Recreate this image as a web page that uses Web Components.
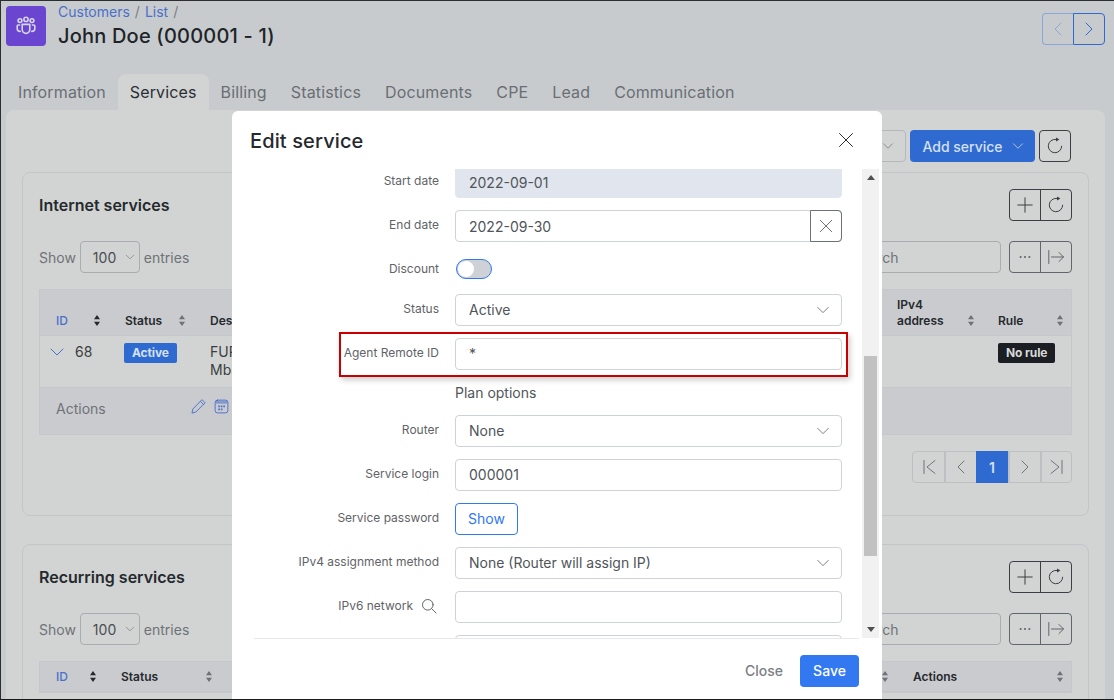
<!DOCTYPE html>
<html>
<head>
<meta charset="utf-8">
<title>Edit service</title>
<style>
    html, body { margin: 0; padding: 0; height: 100%; }
    body { font-family: Inter, "Liberation Sans", sans-serif; font-size: 14px; overflow: hidden; }
</style>
</head>
<body>
<customer-page>
    <page-header slot="header"></page-header>
    <tab-bar slot="tabs"></tab-bar>
    <services-toolbar></services-toolbar>

    <service-card heading="Internet services">
        <data-table columns="68px 85px 1fr 101px 90px">
            <table-head slot="head" first>ID</table-head>
            <table-head slot="head">Status</table-head>
            <table-head slot="head">Description</table-head>
            <table-head slot="head" class="narrow">IPv4<br>address</table-head>
            <table-head slot="head">Rule</table-head>

            <table-cell slot="row" expander>68</table-cell>
            <table-cell slot="row"><status-badge>Active</status-badge></table-cell>
            <table-cell slot="row">FUR<br>Mbps</table-cell>
            <table-cell slot="row"></table-cell>
            <table-cell slot="row"><status-badge kind="dark">No rule</status-badge></table-cell>

            <row-actions slot="footer"></row-actions>
        </data-table>
        <page-nav></page-nav>
    </service-card>

    <service-card heading="Recurring services">
        <data-table columns="64px 116px 1fr 175px">
            <table-head slot="head" first>ID</table-head>
            <table-head slot="head">Status</table-head>
            <table-head slot="head">Description</table-head>
            <table-head slot="head">Actions</table-head>
        </data-table>
    </service-card>

    <edit-dialog slot="overlay" heading="Edit service">
        <form-row label="Start date"><text-box disabled>2022-09-01</text-box></form-row>
        <form-row label="End date"><text-box clearable>2022-09-30</text-box></form-row>
        <form-row label="Discount" short><toggle-switch></toggle-switch></form-row>
        <form-row label="Status"><text-box select>Active</text-box></form-row>
        <form-row label="Agent Remote ID" marked><text-box>*</text-box></form-row>
        <form-row plain label=""><span>Plan options</span></form-row>
        <form-row label="Router"><text-box select>None</text-box></form-row>
        <form-row label="Service login"><text-box>000001</text-box></form-row>
        <form-row label="Service password"><outline-button>Show</outline-button></form-row>
        <form-row label="IPv4 assignment method"><text-box select>None (Router will assign IP)</text-box></form-row>
        <form-row label="IPv6 network" searchable><text-box></text-box></form-row>
        <form-row label=""><text-box></text-box></form-row>
    </edit-dialog>
</customer-page>

<script>
const S = 'fill="none" stroke="currentColor" stroke-width="1" stroke-linecap="round" stroke-linejoin="round"'
const ICONS = {
    down: `<path ${S} d="M2 5l6 6 6-6"/>`,
    left: `<path ${S} d="M11 2L5 8l6 6"/>`,
    right: `<path ${S} d="M5 2l6 6-6 6"/>`,
    first: `<path ${S} d="M3 1.5v13M14 1.5L6 8l8 6.5"/>`,
    last: `<path ${S} d="M13 1.5v13M2 1.5L10 8l-8 6.5"/>`,
    close: `<path ${S} d="M1.5 1.5l13 13M14.5 1.5l-13 13"/>`,
    plus: `<path ${S} d="M8 .8v14.4M.8 8h14.4"/>`,
    refresh: `<path ${S} d="M9 1.4a6.7 6.7 0 1 0 5.7 6.8"/><path fill="currentColor" d="M9 -.4l3.4 1.9L9 3.4z"/>`,
    dots: `<circle fill="currentColor" cx="3" cy="8" r="1.2"/><circle fill="currentColor" cx="8" cy="8" r="1.2"/><circle fill="currentColor" cx="13" cy="8" r="1.2"/>`,
    bar: `<path ${S} d="M.8 1.5v13M3.5 8h12M11 3.5L15.5 8 11 12.5"/>`,
    pencil: `<path ${S} stroke-width="1.2" d="M12 1l3 3L5 14l-4 1 1-4zM10.3 2.7l3 3"/>`,
    calendar: `<rect ${S} stroke-width="1.2" x="1.2" y="1.2" width="13.6" height="13.6" rx="2.5"/><path fill="currentColor" opacity=".55" d="M2 2h12v3H2z"/><path fill="currentColor" d="M4.5 7h1.8v1.8H4.5zM7.2 7H9v1.8H7.2zM9.9 7h1.8v1.8H9.9zM4.5 10.2h1.8V12H4.5zM7.2 10.2H9V12H7.2z"/>`,
    search: `<circle ${S} cx="6.8" cy="6.8" r="5.3"/><path ${S} d="M10.7 10.7l4.3 4.3"/>`,
    group: `<g fill="none" stroke="currentColor" stroke-width="1.6" stroke-linecap="round" stroke-linejoin="round"><circle cx="4" cy="4.6" r="1.9"/><circle cx="10" cy="3.4" r="2.1"/><circle cx="16" cy="4.6" r="1.9"/><path d="M6.2 8.4h7.6v5.2a3.8 3.8 0 0 1-7.6 0z"/><path d="M3.6 9H2.2a1 1 0 0 0-1 1v2.4a3 3 0 0 0 3 3M16.4 9h1.4a1 1 0 0 1 1 1v2.4a3 3 0 0 1-3 3"/></g>`
}

function icon(name, size) {
    const box = name == 'group' ? 20 : 16
    return `<svg width="${size}" height="${size}" viewBox="0 0 ${box} ${box}" style="display:block;flex:none;overflow:visible">${ICONS[name]}</svg>`
}

class ShadowElement extends HTMLElement {
    constructor() {
        super()
        this.attachShadow({ mode: 'open' })
    }
    connectedCallback() {
        const template = document.createElement('template')
        template.innerHTML = this.render()
        this.shadowRoot.appendChild(template.content.cloneNode(true))
    }
}

const BTN = `
    .group { display: inline-flex; height: 32px; box-sizing: border-box; border: 1px solid var(--btn, #3b4045); border-radius: 4px; color: var(--btn, #3b4045); }
    .group > div { width: 30px; display: flex; align-items: center; justify-content: center; }
    .group > div + div { width: 31px; box-sizing: border-box; border-left: 1px solid var(--btn, #3b4045); }
`

class CustomerPage extends ShadowElement {
    render() {
        return `
        <style>
            :host { display: block; position: relative; width: 1114px; height: 700px; box-sizing: border-box; overflow: hidden;
                border-top: 1px solid #2b2d2f; border-left: 1px solid #2b2d2f; border-bottom: 1px solid #17181a; background: #c8cbce; color: #25292d; }
            .panel { margin: 0 9px 0 5px; background: #d2d4d3; border-radius: 8px 8px 0 0; padding: 20px 16px 0; display: flex; flex-direction: column; height: 590px; box-sizing: border-box; }
            .panel ::slotted(service-card) { margin-bottom: 28px; }
        </style>
        <slot name="header"></slot>
        <slot name="tabs"></slot>
        <div class="panel"><slot></slot></div>
        <slot name="overlay"></slot>`
    }
}

class PageHeader extends ShadowElement {
    render() {
        return `
        <style>
            :host { display: flex; height: 73px; padding: 5px 9px 0 5px; box-sizing: border-box; }
            .logo { width: 40px; height: 40px; border-radius: 4px; background: #6a46d0; color: #d9d5ec; display: flex; align-items: center; justify-content: center; }
            .names { margin-left: 12px; flex: 1; }
            .crumbs { font-size: 14px; line-height: 12px; color: #7a7e82; }
            .crumbs span { color: #4a70c9; }
            .crumbs i { font-style: normal; margin: 0 5px; }
            h1 { margin: 3px 0 0; font-size: 20px; line-height: 30px; font-weight: 500; letter-spacing: .2px; color: #202428; }
            .nav { display: flex; margin-top: 7px; height: 32px; }
            .nav div { display: flex; align-items: center; justify-content: center; box-sizing: border-box; height: 32px; }
            .prev { width: 31px; border: 1px solid #8aa6da; border-right: 0; border-radius: 4px 0 0 4px; color: #8aa6da; }
            .next { width: 32px; border: 1px solid #2f6ad0; border-radius: 0 4px 4px 0; color: #2f6ad0; }
        </style>
        <div class="logo">${icon('group', 20)}</div>
        <div class="names">
            <div class="crumbs"><span>Customers</span><i>/</i><span>List</span><i>/</i></div>
            <h1>John Doe (000001 - 1)</h1>
        </div>
        <div class="nav"><div class="prev">${icon('left', 16)}</div><div class="next">${icon('right', 16)}</div></div>`
    }
}

class TabBar extends ShadowElement {
    render() {
        const tabs = ['Information', 'Services', 'Billing', 'Statistics', 'Documents', 'CPE', 'Lead', 'Communication']
        return `
        <style>
            :host { display: flex; height: 36px; padding-left: 5px; font-size: 16px; letter-spacing: .14px; color: #6a6f74; }
            div { padding: 0 12px; line-height: 36px; border-radius: 8px 8px 0 0; }
            .on { background: #d2d4d3; color: #2a2e33; }
        </style>
        ${tabs.map((t, i) => `<div class="${i == 1 ? 'on' : ''}">${t}</div>`).join('')}`
    }
}

class ServicesToolbar extends ShadowElement {
    render() {
        return `
        <style>
            :host { display: flex; justify-content: flex-end; gap: 4px; height: 32px; margin-bottom: 10px; padding-right: 18px; }
            .sel { width: 60px; box-sizing: border-box; border: 1px solid #b4b8bb; border-radius: 4px; display: flex; align-items: center; justify-content: flex-end; padding-right: 11px; color: #6f7479; }
            .add { width: 125px; box-sizing: border-box; background: #2f6ad0; color: #d5e0f2; border-radius: 4px; display: flex; align-items: center; justify-content: center; gap: 9px; padding-left: 1px; font-size: 14px; font-weight: 500; }
            ${BTN}
        </style>
        <div class="sel">${icon('down', 12)}</div>
        <div class="add">Add service ${icon('down', 12)}</div>
        <div class="group"><div>${icon('refresh', 16)}</div></div>`
    }
}

class ServiceCard extends ShadowElement {
    render() {
        return `
        <style>
            :host { display: block; box-sizing: border-box; border: 1px solid #c2c6c8; border-radius: 8px; padding: 16px 16px 32px; flex: none; }
            .top { display: flex; justify-content: space-between; align-items: center; height: 32px; margin-bottom: 20px; }
            h2 { margin: 0; font-size: 16px; font-weight: 600; color: #25292d; }
            .tools { display: flex; justify-content: space-between; height: 32px; margin-bottom: 16px; }
            .show { display: flex; align-items: center; gap: 4px; color: #6e7377; }
            .num { width: 60px; height: 32px; box-sizing: border-box; border: 1px solid #a9adb0; border-radius: 4px; display: flex; align-items: center; padding-left: 12px; gap: 9px; color: #4a4e52; }
            .num svg { color: #6e7377; }
            .right { display: flex; gap: 8px; }
            .search { width: 300px; height: 32px; box-sizing: border-box; border: 1px solid #a9adb0; border-radius: 4px; display: flex; align-items: center; padding-left: 150px; color: #6e7377; }
            ${BTN}
            .soft { --btn: #60666b; }
            ::slotted(page-nav) { margin-top: 16px; }
        </style>
        <div class="top"><h2>${this.getAttribute('heading')}</h2>
            <div class="group"><div>${icon('plus', 16)}</div><div>${icon('refresh', 16)}</div></div></div>
        <div class="tools">
            <div class="show">Show <div class="num">100 ${icon('down', 10)}</div> entries</div>
            <div class="right"><div class="search">Search</div>
                <div class="group soft"><div>${icon('dots', 14)}</div><div>${icon('bar', 16)}</div></div></div>
        </div>
        <slot></slot>`
    }
}

class DataTable extends ShadowElement {
    render() {
        return `
        <style>
            :host { display: block; border: 1px solid #c5c8ca; }
            .head, .row { display: grid; grid-template-columns: ${this.getAttribute('columns')}; }
            .head { background: #cacbcf; }
            .row { border-top: 1px solid #c5c8ca; }
        </style>
        <div class="head"><slot name="head"></slot></div>
        <div class="row"><slot name="row"></slot></div>
        <slot name="footer"></slot>`
    }
}

class TableHead extends ShadowElement {
    render() {
        const first = this.hasAttribute('first')
        return `
        <style>
            :host { display: flex; align-items: flex-end; justify-content: space-between; padding: 7px 8px 6px ${first ? 16 : 17}px; font-size: 12px; line-height: 16px; color: ${first ? '#4a70c9' : '#25292d'}; min-width: 0; }
            :host(.narrow) { padding-right: 7px; }
            .t { white-space: nowrap; overflow: hidden; font-weight: ${first ? 500 : 600}; }
            svg { display: block; flex: none; margin-bottom: 3px; color: ${first ? '#25292d' : '#6c7277'}; }
        </style>
        <div class="t"><slot></slot></div>
        <svg width="6" height="11" viewBox="0 0 6 11"><path fill="currentColor" d="M3 0l3 4.2H0zM3 11L0 6.8h6z"/></svg>`
    }
}

class TableCell extends ShadowElement {
    render() {
        const exp = this.hasAttribute('expander')
        return `
        <style>
            :host { display: block; height: 51px; box-sizing: border-box; padding: 7px 0 0 ${exp ? 9 : 17}px; font-size: 14px; line-height: 18px; color: #3a3e42; white-space: nowrap; overflow: hidden; }
            .e { display: flex; align-items: center; gap: 10px; }
            .e svg { color: #4a70c9; }
        </style>
        ${exp ? `<div class="e">${icon('down', 16)}<slot></slot></div>` : '<slot></slot>'}`
    }
}

class StatusBadge extends ShadowElement {
    render() {
        const dark = this.getAttribute('kind') == 'dark'
        return `
        <style>
            :host { display: inline-block; height: 20px; line-height: 20px; padding: 0 8px; border-radius: 2px; font-size: 12px; font-weight: 700; letter-spacing: -.1px; background: ${dark ? '#1b1f23' : '#2f6ad0'}; color: ${dark ? '#d8d9da' : '#d5e0f2'}; vertical-align: top; margin-left: ${dark ? 0 : -1}px; }
        </style><slot></slot>`
    }
}

class RowActions extends ShadowElement {
    render() {
        return `
        <style>
            :host { display: flex; align-items: center; height: 46px; box-sizing: content-box; background: #cacbcf; border-top: 1px solid #c5c8ca; padding-left: 16px; color: #6e7377; font-size: 14px; }
            .a { margin-top: -6px; }
            .i { display: flex; gap: 8px; margin-left: 85px; color: #4a70c9; margin-top: -10px; }
        </style>
        <span class="a">Actions</span><div class="i">${icon('pencil', 15)}${icon('calendar', 15)}</div>`
    }
}

class PageNav extends ShadowElement {
    render() {
        const cell = (inner, on) => `<div class="${on ? 'on' : ''}">${inner}</div>`
        return `
        <style>
            :host { display: flex; justify-content: flex-end; height: 32px; }
            .wrap { display: flex; border: 1px solid #bcc0c3; border-radius: 4px; box-sizing: border-box; color: #6f7479; }
            .wrap > div { display: flex; align-items: center; justify-content: center; border-left: 2px solid #bcc0c3; box-sizing: border-box; width: 32px; }
            .wrap > div:first-child { border-left: 0; width: 31px; }
            .wrap > div:last-child { width: 31px; }
            .on { background: #2f6ad0; color: #d5e0f2; font-weight: 600; font-size: 14px; border: 0 !important; margin: -1px 0; }
        </style>
        <div class="wrap">
            ${cell(icon('first', 16))}${cell(icon('left', 16))}${cell('1', true)}${cell(icon('right', 16))}${cell(icon('last', 16))}
        </div>`
    }
}

class EditDialog extends ShadowElement {
    render() {
        return `
        <style>
            :host { position: absolute; left: 231px; top: 110px; bottom: 0; width: 650px; background: #fff; border-radius: 6px 6px 0 0; display: flex; flex-direction: column; color: #25292d; }
            header { display: flex; justify-content: space-between; align-items: center; height: 58px; flex: none; padding: 2px 28px 0 18px; box-sizing: border-box; }
            h3 { margin: 0; font-size: 20px; font-weight: 500; letter-spacing: .12px; color: #25292d; }
            .x { color: #2b2f33; margin-top: -2px; }
            .mid { flex: 1; display: flex; min-height: 0; padding-right: 3px; }
            .form { flex: 1; overflow: hidden; }
            .inner { display: flex; flex-direction: column; gap: 12px; margin-top: -3px; }
            .inner ::slotted(form-row) { flex: none; }
            .bar { width: 17px; background: #f1f1f1; display: flex; flex-direction: column; align-items: center; flex: none; }
            .arrow { height: 17px; display: flex; align-items: center; justify-content: center; flex: none; color: #505050; }
            .thumb { width: 13px; height: 200px; background: #c1c1c1; margin-top: 170px; }
            .sp { flex: 1; }
            footer { flex: none; height: 61px; margin: 0 23px 0 22px; border-top: 1px solid #e6e8ec; display: flex; justify-content: flex-end; align-items: flex-start; padding-top: 16px; box-sizing: border-box; gap: 17px; }
            .close { line-height: 32px; color: #7b8085; font-size: 14px; font-weight: 500; }
            .save { width: 59px; height: 32px; line-height: 32px; text-align: center; border-radius: 4px; background: #3278f0; color: #fff; font-size: 14px; font-weight: 500; }
        </style>
        <header><h3>${this.getAttribute('heading')}</h3><div class="x">${icon('close', 16)}</div></header>
        <div class="mid">
            <div class="form"><div class="inner"><slot></slot></div></div>
            <div class="bar">
                <div class="arrow"><svg width="8" height="5" viewBox="0 0 8 5"><path fill="currentColor" d="M4 0l4 5H0z"/></svg></div>
                <div class="thumb"></div><div class="sp"></div>
                <div class="arrow"><svg width="8" height="5" viewBox="0 0 8 5"><path fill="currentColor" d="M4 5l4-5H0z"/></svg></div>
            </div>
        </div>
        <footer><div class="close">Close</div><div class="save">Save</div></footer>`
    }
}

class FormRow extends ShadowElement {
    render() {
        return `
        <style>
            :host { display: grid; grid-template-columns: 207px 387px; column-gap: 16px; position: relative; align-items: start; }
            :host([short]) { height: 28px; }
            :host([plain]) { height: 21px; }
            .label { font-size: 12px; line-height: 30px; color: #5f6368; display: flex; justify-content: flex-end; align-items: center; gap: 8px; }
            :host([searchable]) .label { padding-right: 2px; }
            :host([plain]) .label { height: 21px; }
            :host([plain]) .control { line-height: 21px; color: #50555a; font-size: 14px; }
            .mark { position: absolute; left: 107px; top: -6px; width: 509px; height: 45px; box-sizing: border-box; border: 2px solid #c90000; box-shadow: 2px 3px 6px rgba(0,0,0,.2); pointer-events: none; }
            .lens { color: #60666b; }
        </style>
        <div class="label"><span>${this.getAttribute('label')}</span>${this.hasAttribute('searchable') ? `<span class="lens">${icon('search', 16)}</span>` : ''}</div>
        <div class="control"><slot></slot></div>
        ${this.hasAttribute('marked') ? '<div class="mark"></div>' : ''}`
    }
}

class TextBox extends ShadowElement {
    render() {
        const select = this.hasAttribute('select')
        const clear = this.hasAttribute('clearable')
        return `
        <style>
            :host { display: flex; align-items: center; height: 32px; box-sizing: border-box; border: 1px solid #ced2da; border-radius: 4px; padding-left: 13px; padding-bottom: 1px; font-size: 14px; color: #50555a; }
            :host([disabled]) { background: #e1e5ed; border-color: #e1e5ed; padding-bottom: 0; }
            :host([clearable]) { padding-bottom: 0; }
            .t { flex: 1; }
            .chev { margin-right: 11px; color: #686d72; }
            .clr { width: 32px; height: 32px; margin: -1px; box-sizing: border-box; border: 1px solid #6c7277; border-radius: 0 4px 4px 0; display: flex; align-items: center; justify-content: center; color: #5c6166; }
        </style>
        <div class="t"><slot></slot></div>
        ${select ? `<div class="chev">${icon('down', 14)}</div>` : ''}
        ${clear ? `<div class="clr">${icon('close', 14)}</div>` : ''}`
    }
}

class ToggleSwitch extends ShadowElement {
    render() {
        return `
        <style>
            :host { display: block; width: 36px; height: 20px; margin: 5px 0 3px 1px; box-sizing: border-box; border: 1px solid #3278f0; border-radius: 10px; background: #ced1d6; position: relative; }
            i { position: absolute; left: 1px; top: 1px; width: 16px; height: 16px; border-radius: 50%; background: #fff; }
        </style><i></i>`
    }
}

class OutlineButton extends ShadowElement {
    render() {
        return `
        <style>
            :host { display: block; width: 63px; height: 32px; line-height: 30px; box-sizing: border-box; text-align: center; border: 1px solid #3278f0; border-radius: 4px; color: #3278f0; font-size: 14px; }
        </style><slot></slot>`
    }
}

customElements.define('customer-page', CustomerPage)
customElements.define('page-header', PageHeader)
customElements.define('tab-bar', TabBar)
customElements.define('services-toolbar', ServicesToolbar)
customElements.define('service-card', ServiceCard)
customElements.define('data-table', DataTable)
customElements.define('table-head', TableHead)
customElements.define('table-cell', TableCell)
customElements.define('status-badge', StatusBadge)
customElements.define('row-actions', RowActions)
customElements.define('page-nav', PageNav)
customElements.define('edit-dialog', EditDialog)
customElements.define('form-row', FormRow)
customElements.define('text-box', TextBox)
customElements.define('toggle-switch', ToggleSwitch)
customElements.define('outline-button', OutlineButton)
</script>
</body>
</html>
